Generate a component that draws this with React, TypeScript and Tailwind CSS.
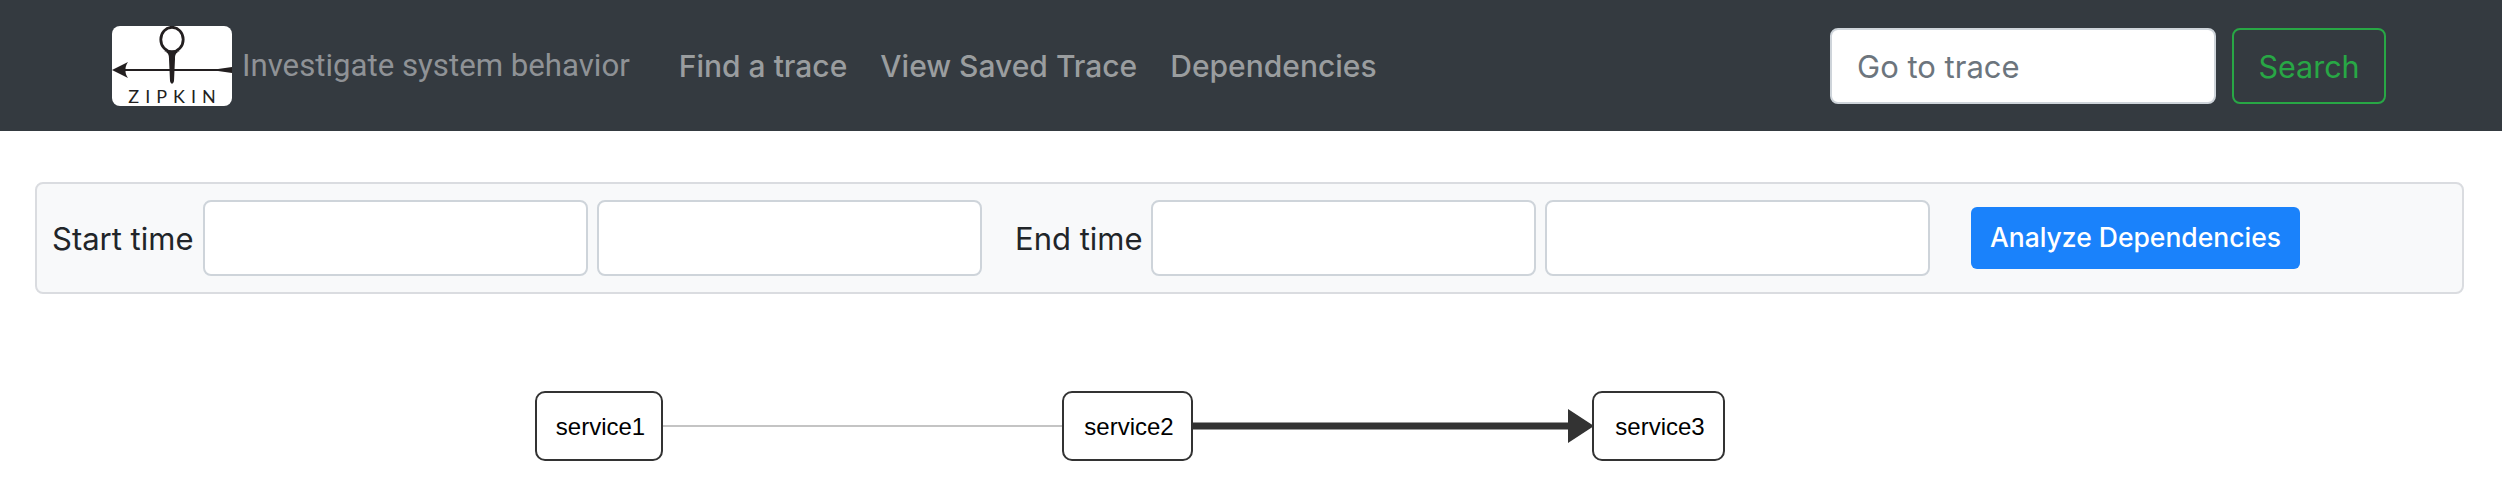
const sans = 'font-["Inter",sans-serif]';

function ZipkinLogo() {
  return (
    <div className="relative w-[120px] h-[80px] bg-white rounded-[8px] overflow-hidden shrink-0">
      <svg viewBox="0 0 120 80" className="absolute inset-0 w-full h-full">
        <ellipse cx="60" cy="13.5" rx="11.2" ry="12.2" fill="none" stroke="#231f20" strokeWidth="2.8" />
        <path d="M52 25 C56.5 27 57 29 57 33 L58 55 C59 58.5 61 58.5 62 55 L63 33 C63 29 63.5 27 68 25 C63 26.5 57 26.5 52 25 Z" fill="#231f20" />
        <path d="M0 44 L16 36 C14 39 13.5 41 13.5 43 L120 43 L120 45 L13.5 45 C13.5 47 14 49 16 52 Z" fill="#231f20" />
        <path d="M106 43 L120 41 L120 47 L106 45 Z" fill="#231f20" />
      </svg>
      <span className="absolute left-0 right-0 top-[60px] text-center text-[#231f20] text-[18px] leading-[20px] tracking-[6px] pl-[6px] font-['Lato',sans-serif]">ZIPKIN</span>
    </div>
  );
}

function TimeInput() {
  return <input type="text" className="w-[385px] h-[76px] bg-white border-2 border-[#ced4da] rounded-[8px]" />;
}

function DependencyGraph() {
  const nodes = [
    { name: "service1", x: "left-[535px] w-[128px]" },
    { name: "service2", x: "left-[1062px] w-[131px]" },
    { name: "service3", x: "left-[1592px] w-[133px]" },
  ];
  return (
    <div className="relative h-[204px]">
      <svg width="2502" height="204" className="absolute inset-0">
        <line x1="662" y1="132" x2="1062" y2="132" stroke="#c4c4c4" strokeWidth="2" />
        <line x1="1192" y1="132" x2="1570" y2="132" stroke="#333333" strokeWidth="7" />
        <polygon points="1568,115 1594,132 1568,149" fill="#333333" />
      </svg>
      {nodes.map((n) => (
        <div
          key={n.name}
          className={`absolute top-[97px] h-[70px] pt-[2px] pl-[3px] flex items-center justify-center bg-white border-2 border-[#333333] rounded-[10px] text-black text-[24px] font-['Liberation_Sans',sans-serif] ${n.x}`}
        >
          {n.name}
        </div>
      ))}
    </div>
  );
}

export default function App() {
  return (
    <div className={`w-[2502px] h-[498px] bg-white overflow-hidden ${sans}`}>
      <nav className="h-[131px] bg-[#343a40] flex items-center pl-[112px] pr-[116px]">
        <ZipkinLogo />
        <span className="ml-[10px] pt-[1px] text-[31.2px] text-[#8f9296] font-['Roboto',sans-serif]">Investigate system behavior</span>
        <div className="ml-[49px] pt-[2px] flex gap-[33px] text-[30px] font-medium text-[#9a9d9f]">
          <a>Find a trace</a>
          <a>View Saved Trace</a>
          <a>Dependencies</a>
        </div>
        <div className="ml-auto flex gap-[16px]">
          <input
            placeholder="Go to trace"
            className="w-[386px] h-[76px] px-[25px] pt-[2px] bg-white border-2 border-[#ced4da] rounded-[8px] text-[31px] placeholder:text-[#6c757d]"
          />
          <button className="w-[154px] h-[76px] pt-[2px] border-2 border-[#28a745] rounded-[8px] text-[30.5px] text-[#28a745]">Search</button>
        </div>
      </nav>
      <div className="mt-[51px] ml-[35px] mr-[38px] h-[112px] bg-[#f8f9fa] border-2 border-[#dadce0] rounded-[8px] flex items-center pl-[15px] text-[31px] text-[#212529]">
        <label className="w-[151px] pt-[2px]">Start time</label>
        <div className="flex gap-[9px]">
          <TimeInput />
          <TimeInput />
        </div>
        <label className="ml-[33px] w-[136px] pt-[2px]">End time</label>
        <div className="flex gap-[9px]">
          <TimeInput />
          <TimeInput />
        </div>
        <button className="ml-[41px] w-[329px] h-[62px] mb-[1px] bg-[#1a82fb] text-white rounded-[6px] text-[26.5px] font-medium">Analyze Dependencies</button>
      </div>
      <DependencyGraph />
    </div>
  );
}
